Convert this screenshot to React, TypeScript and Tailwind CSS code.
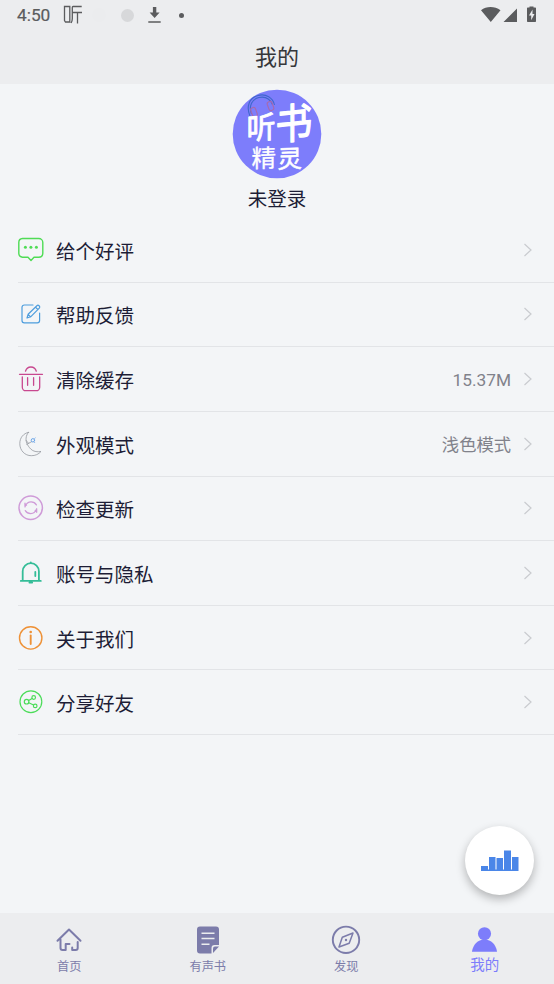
import type { ReactNode } from "react";

const Chevron = () => (
  <svg className="ml-3 mr-[22px] h-[14px] w-[9px]" viewBox="0 0 9 14" fill="none" stroke="#c9cbcf" strokeWidth="1.2">
    <path d="M1.500 1 8 7 1.500 13" />
  </svg>
);

const Icon = ({ color, width = 1.3, children }: { color: string; width?: number; children: ReactNode }) => (
  <svg className="h-[26px] w-[26px] shrink-0" viewBox="0 0 26 26" fill="none" stroke={color} strokeWidth={width} strokeLinecap="round" strokeLinejoin="round">
    {children}
  </svg>
);

const rows: { label: string; value?: string; icon: ReactNode }[] = [
  {
    label: "给个好评",
    icon: (
      <Icon color="#4fdc55" width={1.4}>
        <path d="M4.5 1.500h16.300a4 4 0 0 1 4 4v11a4 4 0 0 1-4 3.700H16l-3 3.300-3-3.300H4.500A4 4 0 0 1 .8 16.500v-11a4 4 0 0 1 3.700-4Z" />
        <g fill="#4fdc55" stroke="none">
          <circle cx="7.400" cy="10.300" r="1.500" />
          <circle cx="12.900" cy="10.300" r="1.500" />
          <circle cx="18.400" cy="10.300" r="1.500" />
        </g>
      </Icon>
    ),
  },
  {
    label: "帮助反馈",
    icon: (
      <Icon color="#4d9ddd" width={1.2}>
        <path d="M15 4H6.300A2.300 2.300 0 0 0 4 6.300v13.200a2.300 2.300 0 0 0 2.300 2.300h13a2.300 2.300 0 0 0 2.300-2.300V12" />
        <path d="m9 17 1.100-3.700 8.800-8.600a1.500 1.500 0 0 1 2.100 0l.3.300a1.500 1.500 0 0 1 0 2.100L12.600 15.800 9 17Zm1.100-3.700 2.500 2.500m4.900-9.700 2.300 2.400" />
      </Icon>
    ),
  },
  {
    label: "清除缓存",
    value: "15.37M",
    icon: (
      <Icon color="#c8488f" width={1.3}>
        <path d="M1.500 8.300h23M7.500 5.200C8.200 2.800 10.200 1 12.900 1s4.700 1.800 5.400 4.200M4.300 11v10.200a3.500 3.500 0 0 0 3.500 3.500h10.400a3.500 3.500 0 0 0 3.500-3.500V11" />
        <path d="M9.600 11.700v7.600m6-7.600v7.600" />
      </Icon>
    ),
  },
  {
    label: "外观模式",
    value: "浅色模式",
    icon: (
      <Icon color="#8f9399" width={0.75}>
        <path d="M10.500 1.300C5.300 2.500 1.800 6.700 1.800 12.600c0 6.800 5 12.100 11.500 12.100 3.900 0 7.500-1.500 9.700-4.200-7.800 1.300-11-2.500-13.500-6.800C7.200 9.500 7.600 4.600 10.500 1.300Z" />
        <path d="m8.800 13.300 4.800-2.600m-5.400-1.200 2.300 2.800" />
        <circle cx="14.900" cy="9.300" r="1.700" stroke="#6ca6e8" strokeWidth="1" />
        <path d="m16.500 7.600.8-.7m-1.300 4 .8.8" stroke="#6ca6e8" />
      </Icon>
    ),
  },
  {
    label: "检查更新",
    icon: (
      <Icon color="#cf9bd8" width={1.500}>
        <circle cx="12.700" cy="12.700" r="11.700" />
        <path d="M7 11.900V8.200m.3 3.200c1-3 3-4.500 5.800-4.500 2.300 0 4.200 1.200 5.300 3M18.700 13.700v3.600m-.3-3.200c-1 3-3 4.500-5.700 4.500-2.400 0-4.300-1.200-5.400-3" strokeWidth="1.200" />
        <path d="m6.800 8.100 2.500 2.600H6.800Zm12 9.300-2.600-2.500h2.600Z" fill="#cf9bd8" stroke="none" />
      </Icon>
    ),
  },
  {
    label: "账号与隐私",
    icon: (
      <Icon color="#34bd98" width={1.800}>
        <path d="M4.700 20.500v-9.200a8.100 8.100 0 0 1 16.200 0v9.200M2.800 20.900h20M12.800 2.700v-.4M11.400 22.600h2.800" />
        <path d="M17.300 12v4" />
      </Icon>
    ),
  },
  {
    label: "关于我们",
    icon: (
      <Icon color="#ee9136" width={1.400}>
        <circle cx="12.700" cy="12.900" r="11.200" />
        <path d="M12.700 10.400v8.600" strokeWidth="1.900" />
        <circle cx="12.700" cy="7" r="1.300" fill="#ee9136" stroke="none" />
      </Icon>
    ),
  },
  {
    label: "分享好友",
    icon: (
      <Icon color="#4bdc59" width={1.200}>
        <circle cx="12.900" cy="12.700" r="10.900" />
        <circle cx="8.600" cy="12.700" r="2.300" />
        <circle cx="15.700" cy="8.500" r="1.800" />
        <circle cx="17.200" cy="16.900" r="1.800" />
        <path d="m10.600 11.500 3.500-2m-3.300 4.200 4.700 2.300" />
      </Icon>
    ),
  },
];

const Avatar = () => (
  <svg className="h-[90px] w-[90px] overflow-visible" viewBox="0 0 90 90" fontFamily="'Noto Sans CJK SC', sans-serif" fontWeight="400" fill="#fff" stroke="#fff" strokeWidth=".9" strokeLinejoin="round">
    <circle cx="45" cy="45" r="44.300" fill="#7d7dfb" stroke="none" />
    <g fill="none" strokeWidth="1.100">
      <path d="M18 27C14 18 17 9 26 6.500c8-2.200 15 2.500 16.500 9.500M19.500 25C16.500 17 20 10 27 8.500c6-1.300 11 1.500 13.500 7" stroke="#3f68cc" />
      <rect x="19.500" y="18.500" width="5" height="9" rx="2" transform="rotate(-20 22 23)" stroke="#a76aae" />
      <rect x="36" y="12.500" width="5" height="9" rx="2" transform="rotate(-20 38.500 17)" stroke="#a76aae" />
    </g>
    <text transform="translate(14.500 51) skewY(-5) scale(1 1.050)" fontSize="29">听</text>
    <text transform="translate(43.500 51.500) skewY(-6) scale(.970 1.100)" fontSize="38" strokeWidth="1.200">书</text>
    <text transform="translate(19.500 78.500) skewY(-2)" fontSize="24.500" strokeWidth=".3">精</text>
    <text transform="translate(45.500 79) skewY(-2)" fontSize="24.500" strokeWidth=".6">灵</text>
  </svg>
);

const tabs: { label: string; active?: boolean; icon: ReactNode }[] = [
  {
    label: "首页",
    icon: (
      <g fill="none" stroke="#7c7caa" strokeWidth="2" strokeLinecap="round" strokeLinejoin="round">
        <path d="M3.500 15.700 15 4.500l11.500 11.200M6.500 14.500V23q0 2 2 2h3.200v-6h3.800M23.700 17v6q0 2-2 2h-3.500v-2.500" />
      </g>
    ),
  },
  {
    label: "有声书",
    icon: (
      <>
        <path d="M7 1.500h16a3 3 0 0 1 3 3V20h-4.500a3 3 0 0 0-3 3v5.500H7a3 3 0 0 1-3-3v-21a3 3 0 0 1 3-3Z" fill="#7c7caa" />
        <path d="M20 28v-4.500a2 2 0 0 1 2-2h4Z" fill="#7c7caa" />
        <path d="M8.500 8.200h13M8.500 13.500h13M8.500 19.300h8" stroke="#ecedef" strokeWidth="1.500" />
      </>
    ),
  },
  {
    label: "发现",
    icon: (
      <g fill="none" stroke="#7c7caa" strokeWidth="1.900" strokeLinejoin="round">
        <circle cx="15" cy="14.800" r="13.200" />
        <path d="m22 8-3.800 10.200L8 22l3.300-9.700Z" strokeWidth="1.500" />
        <circle cx="15" cy="15" r="1.200" fill="#7c7caa" stroke="none" />
      </g>
    ),
  },
  {
    label: "我的",
    active: true,
    icon: (
      <g fill="#7d7dfb">
        <circle cx="15" cy="9" r="6.800" />
        <path d="M2 27.700C3 20.500 8 15 15 15s12 5.500 13 12.700Z" />
      </g>
    ),
  },
];

export default function App() {
  return (
    <div className="relative flex h-[984px] w-[554px] flex-col overflow-hidden bg-[#f3f5f7] font-['Noto_Sans_CJK_SC',sans-serif] text-[#1d1d36]">
      <header className="h-[84px] shrink-0 bg-[#ecedef]">
        <div className="flex h-[30px] items-center text-[#5b5c5e]">
          <span className="ml-[17px] w-[34px] whitespace-nowrap pt-0.5 font-['Roboto',sans-serif] text-[17.300px] leading-none [-webkit-text-stroke:0.2px]">4:50</span>
          <svg className="ml-3 h-5 w-5" viewBox="0 0 20 20" fill="none" stroke="currentColor" strokeWidth="1.300">
            <path d="M1.500 1.500h5.300V17H2.500l-1-1.500ZM18.700 1.500H10q-.7 0-.7 1v11q0 2.500-1.200 4.500M9.500 7.500H19M14.500 7.500V18.500" />
          </svg>
          <span className="ml-[9px] h-3.5 w-3.5 rounded-full bg-[#ebecee]" />
          <span className="ml-[15px] h-[13px] w-[13px] rounded-full bg-[#d7d8da]" />
          <svg className="ml-3.5 h-5 w-[13px]" viewBox="0 0 13 20" fill="currentColor">
            <path d="M4.900 2h3.400v5.500h3.300L6.600 13l-5-5.500h3.300ZM.3 16.300h12.400v1.500H.3Z" />
          </svg>
          <span className="ml-[18px] h-[5px] w-[5px] rounded-full bg-[#5b5c5e]" />
          <svg className="ml-auto mr-[17px] h-5 w-14" viewBox="0 0 56 20" fill="currentColor">
            <path d="M0 5.200C5.500.9 13.500.9 19.500 5.200L9.800 17ZM36 3.500V17H22.500ZM48.500 2.500v-1h4v1h1.800q.7 0 .7.800v13q0 .7-.7.700h-7.600q-.7 0-.7-.7v-13q0-.8.700-.8Z" />
            <path d="M51.500 4.500 48 10.500h2.200v4.800l3.300-6.300h-2Z" fill="#ecedef" />
          </svg>
        </div>
        <h1 className="flex h-[50px] items-center justify-center text-[22px] font-normal leading-none text-[#36373a]">我的</h1>
      </header>

      <section className="flex h-[134px] shrink-0 flex-col items-center pt-[5px]">
        <Avatar />
        <div className="mt-2 text-[19.500px] leading-[21px]">未登录</div>
      </section>

      <ul className="pl-[18px]">
        {rows.map((row) => (
          <li key={row.label} className="flex h-[64.650px] items-center border-b border-[#e2e4e7]">
            {row.icon}
            <span className="ml-3 pt-0.5 text-[19.500px] leading-6">{row.label}</span>
            <span className="ml-auto pt-0.5 font-['Roboto','Noto_Sans_CJK_SC',sans-serif] text-[17.300px] leading-6 text-[#81828b]">{row.value}</span>
            <Chevron />
          </li>
        ))}
      </ul>

      <button className="absolute left-[465px] top-[826px] flex h-[69px] w-[69px] items-center justify-center rounded-full bg-white shadow-[0_4px_10px_rgba(0,0,0,0.27)]">
        <svg className="h-[22px] w-[38px]" viewBox="0 0 38 22" fill="#4a86e8">
          <path d="M0 16h7v3.500h1V7h6.500v12.500h1V8H22v11.500h1V.5h7v19h1V7h6.500v14H0Z" />
        </svg>
      </button>

      <nav className="mt-auto flex h-[71px] shrink-0 bg-[#ecedef]">
        {tabs.map((tab) => (
          <div key={tab.label} className="flex flex-1 flex-col items-center pt-3">
            <svg className={tab.active ? "h-[29px] w-[29px]" : "h-[30px] w-[30px]"} viewBox="0 0 30 30">{tab.icon}</svg>
            <span className={tab.active ? "mt-0.5 text-[14.500px] leading-[15px] text-[#7d7dfb]" : "mt-1 text-[12.200px] leading-[14px] text-[#7c7caa]"}>
              {tab.label}
            </span>
          </div>
        ))}
      </nav>
    </div>
  );
}
